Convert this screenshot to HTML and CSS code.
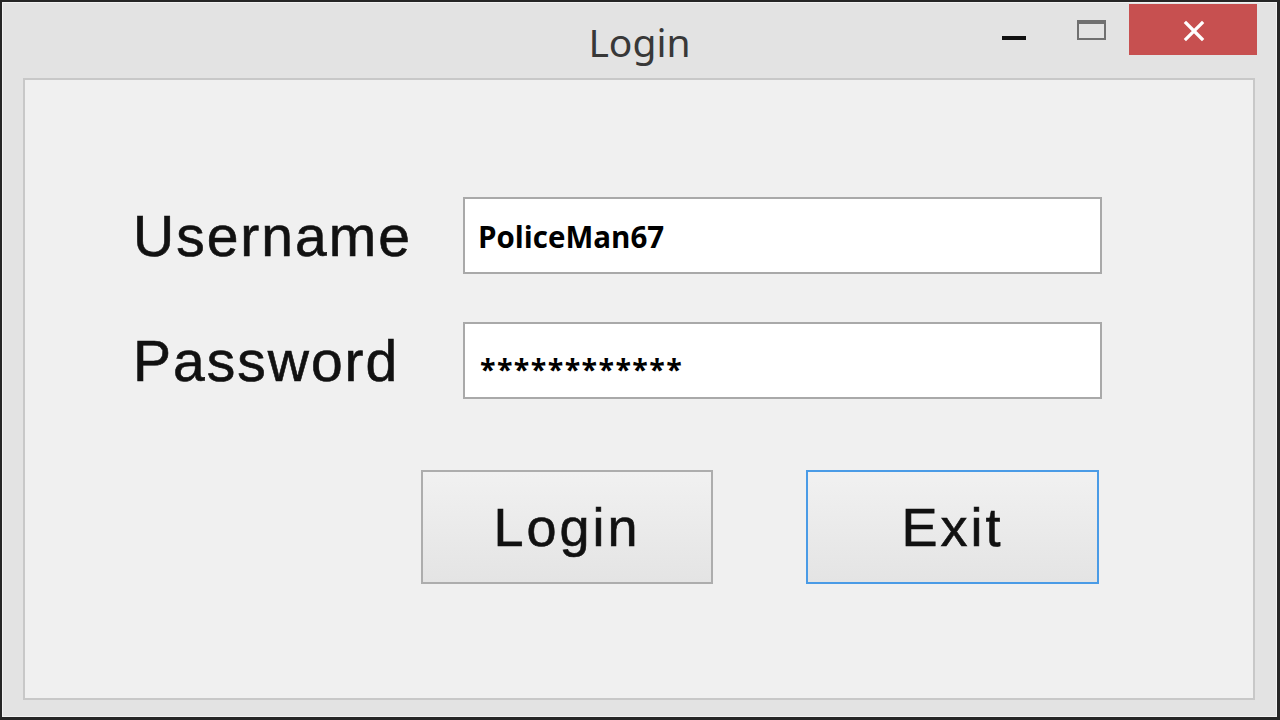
FILE: index.html
```html
<!DOCTYPE html>
<html lang="en">
<head>
<meta charset="utf-8">
<title>Login</title>
<link rel="stylesheet" href="styles.css">
</head>
<body>
<div class="window">
  <div class="titlebar">
    <div class="spacer"></div>
    <div class="title">Login</div>
    <div class="controls">
      <div class="ctl-min"></div>
      <div class="ctl-max"></div>
      <div class="ctl-close">
        <svg width="22" height="22" viewBox="0 0 22 22"><path d="M3 3 L19 19 M19 3 L3 19" stroke="#ffffff" stroke-width="3.2" stroke-linecap="square" fill="none"/></svg>
      </div>
    </div>
  </div>
  <div class="panel">
    <div class="form">
      <div class="label">Username</div>
      <div class="textbox">PoliceMan67</div>
      <div class="label">Password</div>
      <div class="textbox pw">************</div>
    </div>
    <div class="buttons">
      <div class="btn">Login</div>
      <div class="btn focused">Exit</div>
    </div>
  </div>
</div>
</body>
</html>
```
FILE: styles.css
```css
html, body {
  margin: 0;
  padding: 0;
  background: #e3e3e3;
}
.window {
  width: 1280px;
  height: 720px;
  box-sizing: border-box;
  border-style: solid;
  border-color: #262626;
  border-width: 2px 3px 3px 2px;
  background: #e3e3e3;
  box-shadow: inset 0 0 0 1px #f2f2f2;
  display: flex;
  flex-direction: column;
  padding: 0 22px 17px 21px;
}
.titlebar {
  height: 76px;
  flex: none;
  display: grid;
  grid-template-columns: 1fr auto 1fr;
  margin: 0 -22px 0 -21px;
  padding: 0 20px;
}
.title {
  font-family: "Noto Sans", "Open Sans", sans-serif;
  font-size: 39px;
  color: #383838;
  padding-top: 13px;
  line-height: normal;
}
.controls {
  justify-self: end;
  display: flex;
  align-items: flex-start;
}
.ctl-min {
  width: 24px;
  height: 4px;
  background: #111111;
  margin-top: 34px;
  margin-right: 51px;
}
.ctl-max {
  width: 25px;
  height: 14px;
  border: 2px solid #707070;
  border-top-width: 4px;
  margin-top: 18px;
  margin-right: 23px;
}
.ctl-close {
  width: 128px;
  height: 51px;
  margin-top: 2px;
  background: #c75050;
  display: flex;
  align-items: center;
  justify-content: center;
}
.ctl-close svg {
  margin-top: 3px;
  margin-left: 2px;
}
.panel {
  flex: 1;
  border: 2px solid #c8c8c8;
  background: #f0f0f0;
  padding: 117px 0 0 108px;
}
.form {
  display: grid;
  grid-template-columns: 330px 639px;
  row-gap: 48px;
  align-items: center;
}
.label {
  font-family: "Liberation Sans", Arial, sans-serif;
  font-size: 57px;
  letter-spacing: 2px;
  color: #111111;
  -webkit-text-stroke: 0.6px #111111;
}
.textbox {
  height: 77px;
  box-sizing: border-box;
  border: 2px solid #a9a9a9;
  background: #ffffff;
  font-family: "Open Sans", "Noto Sans", sans-serif;
  font-weight: 700;
  font-size: 29.5px;
  color: #000000;
  padding: 18px 0 0 13px;
  line-height: 40px;
  letter-spacing: 0;
}
.textbox.pw {
  font-size: 28.5px;
  padding-top: 25px;
  padding-left: 15px;
  letter-spacing: 1.4px;
}
.buttons {
  display: flex;
  gap: 93px;
  margin-top: 71px;
  margin-left: 288px;
}
.btn {
  width: 292px;
  height: 114px;
  box-sizing: border-box;
  border: 2px solid #adadad;
  background: linear-gradient(#f1f1f1, #e4e4e4);
  font-family: "Liberation Sans", Arial, sans-serif;
  font-size: 54px;
  letter-spacing: 3px;
  color: #111111;
  -webkit-text-stroke: 0.6px #111111;
  display: flex;
  align-items: center;
  justify-content: center;
}
.btn.focused {
  width: 293px;
  border-color: #4a9be6;
}
```
